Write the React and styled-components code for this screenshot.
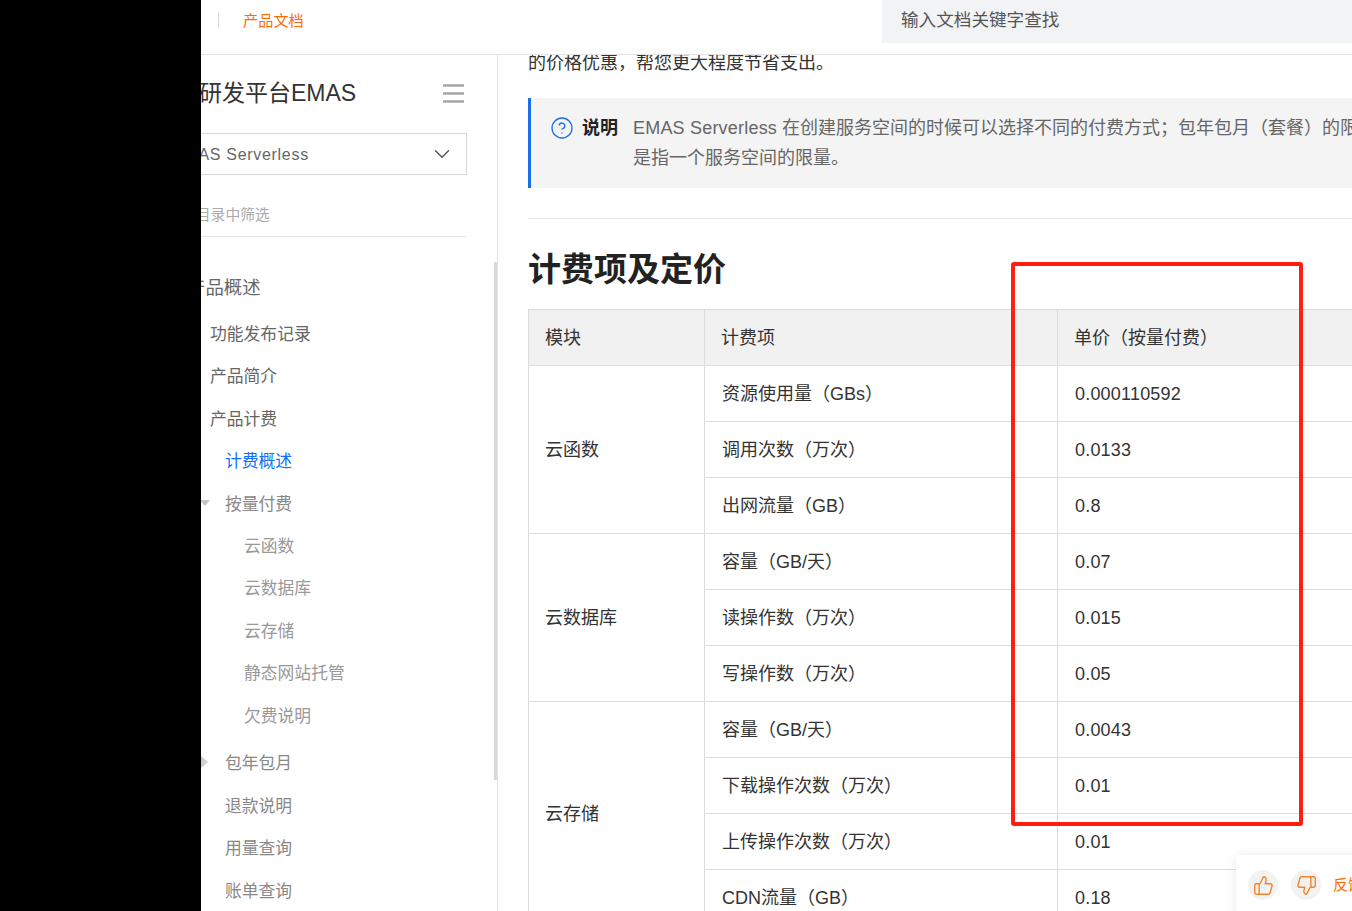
import React from "react";
import styled, { createGlobalStyle } from "styled-components";
import { ChevronDown, CircleHelp, ThumbsUp, ThumbsDown } from "lucide-react";

const GlobalStyle = createGlobalStyle`
  html, body {
    margin: 0;
    padding: 0;
    background: #fff;
    font-family: "Liberation Sans", "Noto Sans CJK SC", sans-serif;
  }
  * { box-sizing: border-box; }
`;

const sideMenu = [
  { label: "功能发布记录", level: 1 },
  { label: "产品简介", level: 1 },
  { label: "产品计费", level: 1 },
  { label: "计费概述", level: 2, active: true },
  { label: "按量付费", level: 2, caret: "down" },
  { label: "云函数", level: 3 },
  { label: "云数据库", level: 3 },
  { label: "云存储", level: 3 },
  { label: "静态网站托管", level: 3 },
  { label: "欠费说明", level: 3, last: true },
  { label: "包年包月", level: 2, caret: "right" },
  { label: "退款说明", level: 2 },
  { label: "用量查询", level: 2 },
  { label: "账单查询", level: 2 },
];

const priceGroups = [
  {
    name: "云函数",
    rows: [
      ["资源使用量（GBs）", "0.000110592"],
      ["调用次数（万次）", "0.0133"],
      ["出网流量（GB）", "0.8"],
    ],
  },
  {
    name: "云数据库",
    rows: [
      ["容量（GB/天）", "0.07"],
      ["读操作数（万次）", "0.015"],
      ["写操作数（万次）", "0.05"],
    ],
  },
  {
    name: "云存储",
    rows: [
      ["容量（GB/天）", "0.0043"],
      ["下载操作次数（万次）", "0.01"],
      ["上传操作次数（万次）", "0.01"],
      ["CDN流量（GB）", "0.18"],
    ],
  },
];

const App = () => {
  return (
    <Page>
      <GlobalStyle />
      <Header>
        <HeaderLeft>
          <HeaderDivider />
          <ProductLink>产品文档</ProductLink>
        </HeaderLeft>
        <SearchBox>输入文档关键字查找</SearchBox>
      </Header>
      <Body>
        <Sidebar>
          <TitleRow>
            <SideTitle>移动研发平台EMAS</SideTitle>
            <svg width="21" height="19" viewBox="0 0 21 19">
              <path d="M0 1.5h21M0 9.5h21M0 17.5h21" stroke="#a6a6a6" strokeWidth="2.4" />
            </svg>
          </TitleRow>
          <SelectBox>
            <span>EMAS Serverless</span>
            <ChevronDown size={26} strokeWidth={1.3} color="#555" />
          </SelectBox>
          <FilterRow>在目录中筛选</FilterRow>
          <Tree>
            <TreeHead>产品概述</TreeHead>
            {sideMenu.map((item) => (
              <TreeRow key={item.label} $level={item.level} $active={item.active} $last={item.last}>
                {item.caret && <Caret $dir={item.caret} />}
                {item.label}
              </TreeRow>
            ))}
          </Tree>
          <ScrollThumb />
        </Sidebar>
        <Main>
          <Article>
            <Para>的价格优惠，帮您更大程度节省支出。</Para>
            <Note>
              <NoteIcon>
                <CircleHelp size={24} strokeWidth={1.3} color="#1a6fe8" />
              </NoteIcon>
              <NoteLabel>说明</NoteLabel>
              <NoteText>
                <Latin>EMAS Serverless</Latin> 在创建服务空间的时候可以选择不同的付费方式；包年包月（套餐）的限额
                <br />
                是指一个服务空间的限量。
              </NoteText>
            </Note>
            <Rule />
            <Heading>计费项及定价</Heading>
            <PriceTable>
              <colgroup>
                <col style={{ width: 176 }} />
                <col style={{ width: 353 }} />
                <col style={{ width: 500 }} />
              </colgroup>
              <thead>
                <tr>
                  <HeadCell>模块</HeadCell>
                  <HeadCell>计费项</HeadCell>
                  <HeadCell>单价（按量付费）</HeadCell>
                </tr>
              </thead>
              <tbody>
                {priceGroups.map((group) =>
                  group.rows.map((row, i) => (
                    <tr key={group.name + row[0]}>
                      {i === 0 && <GroupCell rowSpan={group.rows.length}>{group.name}</GroupCell>}
                      <Cell>{row[0]}</Cell>
                      <PriceCell>{row[1]}</PriceCell>
                    </tr>
                  ))
                )}
              </tbody>
            </PriceTable>
          </Article>
        </Main>
      </Body>
      <BlackStrip />
      <RedMark />
      <Feedback>
        <RoundBtn>
          <ThumbsUp size={21} strokeWidth={1.6} color="#f5822a" />
        </RoundBtn>
        <RoundBtn>
          <ThumbsDown size={21} strokeWidth={1.6} color="#f5822a" />
        </RoundBtn>
        <FeedbackText>反馈</FeedbackText>
      </Feedback>
    </Page>
  );
};

export default App;

const Page = styled.div`
  position: relative;
  width: 1352px;
  height: 911px;
  overflow: hidden;
  background: #fff;
  color: #333;
`;

const BlackStrip = styled.div`
  position: absolute;
  left: 0;
  top: 0;
  bottom: 0;
  width: 201px;
  background: #000;
  z-index: 5;
`;

const Header = styled.header`
  height: 55px;
  display: flex;
  justify-content: space-between;
  align-items: flex-start;
  border-bottom: 1px solid #e3e3e3;
  background: #fff;
  position: relative;
  z-index: 2;
`;

const HeaderLeft = styled.div`
  display: flex;
  align-items: center;
  height: 41px;
  padding-left: 218px;
`;

const HeaderDivider = styled.span`
  width: 1px;
  height: 15px;
  background: #d8d8d8;
  margin-right: 24px;
`;

const ProductLink = styled.a`
  font-size: 15.2px;
  line-height: 20px;
  color: #ff6a00;
`;

const SearchBox = styled.div`
  width: 470px;
  height: 43px;
  padding: 0 19px 7px;
  display: flex;
  align-items: center;
  background: #f2f3f5;
  font-size: 17.6px;
  color: #555;
`;

const Body = styled.div`
  display: flex;
  height: 856px;
`;

const Sidebar = styled.aside`
  position: relative;
  flex: 0 0 498px;
  padding: 21px 30px 0 153px;
  border-right: 1px solid #e3e3e3;
  overflow: hidden;
`;

const TitleRow = styled.div`
  display: flex;
  justify-content: space-between;
  align-items: center;
  height: 34px;
  padding-right: 3px;
`;

const SideTitle = styled.div`
  font-size: 23px;
  line-height: 30px;
  color: #333;
`;

const SelectBox = styled.div`
  height: 42px;
  margin-top: 23px;
  padding: 0 11px 0 19px;
  display: flex;
  justify-content: space-between;
  align-items: center;
  border: 1px solid #d5d5dc;
  font-size: 16px;
  letter-spacing: 0.7px;
  color: #666;

  span {
    padding-top: 1px;
  }
`;

const FilterRow = styled.div`
  height: 62px;
  padding: 16px 0 0 28px;
  display: flex;
  align-items: center;
  border-bottom: 1px solid #e5e5e5;
  font-size: 14.8px;
  color: #aaa;
`;

const Tree = styled.nav`
  padding-top: 29px;
`;

const TreeHead = styled.div`
  height: 45.9px;
  line-height: 44px;
  margin-left: 34px;
  font-size: 18.4px;
  color: #666;
`;

const rowIndent = { 1: 57, 2: 72, 3: 91 };
const rowColor = { 1: "#666", 2: "#888", 3: "#999" };

const TreeRow = styled.div`
  height: 42.4px;
  display: flex;
  align-items: center;
  margin-bottom: ${(p) => (p.$last ? "5.5px" : "0")};
  padding-left: ${(p) => rowIndent[p.$level]}px;
  font-size: 16.8px;
  white-space: nowrap;
  color: ${(p) => (p.$active ? "#0f6fff" : rowColor[p.$level])};
`;

const Caret = styled.span`
  width: 0;
  height: 0;
  margin-left: -25px;
  margin-right: ${(p) => (p.$dir === "down" ? "15px" : "17px")};
  border-style: solid;
  border-color: transparent;
  ${(p) =>
    p.$dir === "down"
      ? "border-width: 6px 5px 0 5px; border-top-color: #c4c4c4;"
      : "border-width: 7px 0 7px 8px; border-left-color: #d0d0d0;"}
`;

const ScrollThumb = styled.div`
  position: absolute;
  right: 0;
  top: 207px;
  width: 3px;
  height: 518px;
  background: #d8d8d8;
`;

const Main = styled.main`
  flex: 1;
  min-width: 0;
  overflow: hidden;
`;

const Article = styled.article`
  width: 1200px;
  margin-top: -7px;
  padding-left: 30px;
`;

const Para = styled.p`
  margin: 0;
  font-size: 18px;
  line-height: 30px;
  color: #333;
`;

const Note = styled.div`
  margin-top: 20px;
  height: 90px;
  padding: 15px 0 0 19px;
  display: flex;
  align-items: flex-start;
  background: #f4f4f4;
  border-left: 3px solid #1a6fe8;
`;

const NoteIcon = styled.span`
  display: flex;
  height: 30px;
  align-items: center;
  margin-right: 8px;
`;

const NoteLabel = styled.strong`
  font-size: 18px;
  line-height: 30px;
  color: #222;
  margin-right: 15px;
`;

const NoteText = styled.div`
  font-size: 18px;
  line-height: 30px;
  color: #666;
  white-space: nowrap;
`;

const Latin = styled.span`
  letter-spacing: 0.2px;
`;

const Rule = styled.hr`
  margin: 30px 0 0;
  border: 0;
  border-top: 1px solid #e5e5e5;
`;

const Heading = styled.h2`
  margin: 31px 0 0;
  height: 40px;
  line-height: 40px;
  font-size: 33px;
  font-weight: 700;
  color: #222;
`;

const PriceTable = styled.table`
  margin-top: 19px;
  width: 1029px;
  table-layout: fixed;
  border-collapse: collapse;
  font-size: 18px;
  color: #333;
`;

const HeadCell = styled.th`
  height: 56px;
  padding: 0 16px 3px;
  text-align: left;
  font-weight: 400;
  background: #f1f1f1;
  border: 1px solid #dcdcdc;
`;

const Cell = styled.td`
  height: 56px;
  padding: 0 16px 3px 17px;
  border: 1px solid #dcdcdc;
`;

const GroupCell = styled(Cell)`
  padding-left: 16px;
`;

const PriceCell = styled(Cell)`
  padding: 1px 16px 0 17px;
  letter-spacing: 0.2px;
`;

const RedMark = styled.div`
  position: absolute;
  left: 1011px;
  top: 262px;
  width: 292px;
  height: 564px;
  border: 4px solid #ff1f10;
  border-radius: 3px;
  z-index: 4;
`;

const Feedback = styled.div`
  position: absolute;
  left: 1236px;
  top: 855px;
  width: 160px;
  height: 70px;
  padding: 15px 0 0 12px;
  display: flex;
  align-items: flex-start;
  gap: 13px;
  background: #fff;
  box-shadow: 0 0 12px rgba(0, 0, 0, 0.08);
  z-index: 4;
`;

const RoundBtn = styled.span`
  width: 30px;
  height: 30px;
  border-radius: 50%;
  display: flex;
  align-items: center;
  justify-content: center;
  background: #f2f2f2;
`;

const FeedbackText = styled.span`
  margin-left: -1px;
  font-size: 15px;
  line-height: 30px;
  color: #ff6a00;
`;
